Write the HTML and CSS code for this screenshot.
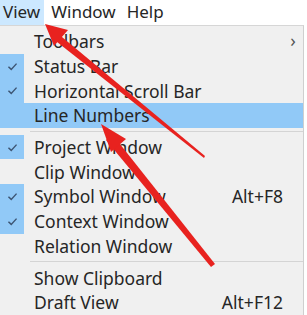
FILE: index.html
```html
<!DOCTYPE html>
<html lang="en">
<head>
    <meta charset="UTF-8">
    <title>View Menu</title>
    <link rel="stylesheet" href="styles.css">
</head>
<body>
    <div class="menubar">
        <span class="menubar-item active">View</span>
        <span class="menubar-item">Window</span>
        <span class="menubar-item">Help</span>
    </div>

    <div class="menu">
        <div class="item has-sub">
            <span class="check"></span>
            <span class="label">Toolbars</span>
            <span class="shortcut"></span>
            <span class="sub">&#8250;</span>
        </div>
        <div class="item">
            <span class="check on"><svg viewBox="0 0 12 10"><path d="M1.5 5.2 L4.6 8.2 L10.5 1.8"/></svg></span>
            <span class="label">Status Bar</span>
        </div>
        <div class="item">
            <span class="check on"><svg viewBox="0 0 12 10"><path d="M1.5 5.2 L4.6 8.2 L10.5 1.8"/></svg></span>
            <span class="label">Horizontal Scroll Bar</span>
        </div>
        <div class="item hover">
            <span class="check"></span>
            <span class="label">Line Numbers</span>
        </div>

        <div class="separator"></div>

        <div class="item">
            <span class="check on"><svg viewBox="0 0 12 10"><path d="M1.5 5.2 L4.6 8.2 L10.5 1.8"/></svg></span>
            <span class="label">Project Window</span>
        </div>
        <div class="item">
            <span class="check"></span>
            <span class="label">Clip Window</span>
        </div>
        <div class="item">
            <span class="check on"><svg viewBox="0 0 12 10"><path d="M1.5 5.2 L4.6 8.2 L10.5 1.8"/></svg></span>
            <span class="label">Symbol Window</span>
            <span class="shortcut">Alt+F8</span>
        </div>
        <div class="item">
            <span class="check on"><svg viewBox="0 0 12 10"><path d="M1.5 5.2 L4.6 8.2 L10.5 1.8"/></svg></span>
            <span class="label">Context Window</span>
        </div>
        <div class="item">
            <span class="check"></span>
            <span class="label">Relation Window</span>
        </div>

        <div class="separator"></div>

        <div class="item">
            <span class="check"></span>
            <span class="label">Show Clipboard</span>
        </div>
        <div class="item">
            <span class="check"></span>
            <span class="label">Draft View</span>
            <span class="shortcut">Alt+F12</span>
        </div>
    </div>

    <!-- annotation arrows drawn over the screenshot -->
    <svg class="annotations" width="307" height="315" viewBox="0 0 307 315">
        <polygon class="arrow-head" points="56,32 205,156 204,158 52,38"/>
        <polygon class="arrow-head" points="45,24 68,30 54,46"/>
        <polygon class="arrow-head" points="112,134 215,264 211,267 106,140"/>
        <polygon class="arrow-head" points="101,124 126,139 111,152"/>
    </svg>
</body>
</html>
```

FILE: styles.css
```css
body {
    margin: 0;
    width: 307px;
    height: 315px;
    overflow: hidden;
    background: #ffffff;
    font-family: "Noto Sans", "Open Sans", sans-serif;
    color: #262626;
    position: relative;
}
.menubar {
    display: flex;
    gap: 4px;
    height: 25px;
    align-items: center;
    font-size: 17px;
}
.menubar-item {
    height: 25px;
    line-height: 24px;
    padding: 0 4px 0 3px;
}
.menubar-item.active {
    background: #cce8ff;
}
.menu {
    width: 303px;
    background: #f0f0f0;
    border-top: 1px solid #d6d6d6;
    border-right: 1px solid #cfcfcf;
    padding-top: 3px;
    font-size: 17.5px;
    height: 300px;
}
.item {
    display: grid;
    grid-template-columns: 24px 1fr auto 20px;
    height: 24.7px;
    align-items: center;
}
.item.hover {
    background: #91c9f7;
}
.check {
    height: 100%;
    display: flex;
    align-items: center;
    justify-content: center;
}
.check.on {
    background: #91c9f7;
}
.check svg {
    width: 11px;
    height: 9px;
    fill: none;
    stroke: #3d5573;
    stroke-width: 1.6;
}
.label {
    padding-left: 10px;
    white-space: nowrap;
}
.shortcut {
    text-align: right;
}
.sub {
    font-size: 18px;
    color: #555;
    text-align: center;
    line-height: 1;
    padding-bottom: 3px;
}
.separator {
    height: 7px;
    display: flex;
    align-items: center;
    padding-left: 30px;
}
.separator::after {
    content: "";
    flex: 1;
    border-top: 1px solid #d4d4d4;
}
.annotations {
    position: absolute;
    left: 0;
    top: 0;
    pointer-events: none;
}
.arrow-head {
    fill: #e8221f;
}
```
